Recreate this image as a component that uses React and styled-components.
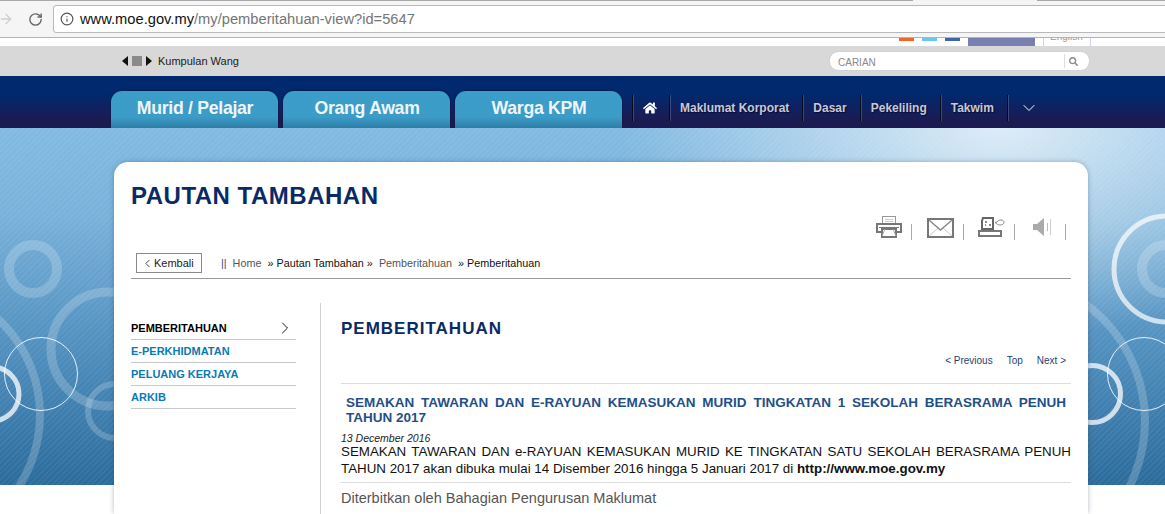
import React from "react";
import styled, { createGlobalStyle } from "styled-components";
import { FaHome, FaSearch } from "react-icons/fa";
import { ArrowRight, ChevronDown, ChevronLeft, ChevronRight, Info, RotateCw } from "lucide-react";

const GlobalStyle = createGlobalStyle`
  html, body {
    margin: 0;
    padding: 0;
    background: #fff;
    overflow: hidden;
  }
  * {
    box-sizing: border-box;
  }
  body {
    font-family: "Liberation Sans", Arial, sans-serif;
  }
`;

const Page = styled.div`
  width: 1165px;
  height: 514px;
  overflow: hidden;
  background: #fff;
`;

const TopEdge = styled.div`
  height: 1px;
  background: linear-gradient(to right, #a8a8a8 913px, #f2f2f2 913px, #f2f2f2 1037px, #a8a8a8 1037px);
`;

const Toolbar = styled.div`
  height: 37px;
  display: flex;
  align-items: flex-start;
  background: #f5f5f5;
  border-bottom: 1px solid #b4b4b4;
  padding-top: 4px;
`;

const BrowserButton = styled.div`
  height: 28px;
  display: flex;
  align-items: center;
  margin-left: ${(p) => p.$left}px;
  color: ${(p) => p.$color};
`;

const AddressBar = styled.div`
  flex: none;
  width: 1130px;
  height: 28px;
  margin-left: 10px;
  display: flex;
  align-items: center;
  gap: 6px;
  padding-left: 6px;
  background: #fff;
  border: 1px solid #b8b8b8;
  border-radius: 3px;
  color: #555;
`;

const Url = styled.span`
  font-size: 14.7px;
  color: #757575;
  white-space: nowrap;
  b {
    font-weight: normal;
    color: #111;
  }
`;

const SiteStrip = styled.div`
  height: 8px;
  display: flex;
  gap: 8px;
  align-items: flex-start;
  padding-left: 899px;
  overflow: hidden;
`;

const SocialChip = styled.div`
  flex: none;
  width: ${(p) => p.$w}px;
  height: ${(p) => p.$h}px;
  background: ${(p) => p.$color};
`;

const Language = styled.div`
  flex: none;
  width: 48px;
  height: 8px;
  border-left: 1px solid #d5d5e5;
  border-right: 1px solid #d5d5e5;
  font-size: 10px;
  line-height: 10px;
  color: #999;
  padding-left: 6px;
  overflow: hidden;
  span {
    display: block;
    margin-top: -6px;
  }
`;

const UtilityBar = styled.div`
  height: 30px;
  display: flex;
  align-items: center;
  background: #d8d8d8;
  padding-left: 122px;
`;

const Ticker = styled.div`
  display: flex;
  align-items: center;
  gap: 4px;
`;

const Arrow = styled.span`
  width: 0;
  height: 0;
  border-top: 5px solid transparent;
  border-bottom: 5px solid transparent;
  ${(p) => (p.$dir === "left" ? "border-right: 6px solid #111;" : "border-left: 6px solid #111;")}
`;

const StopBox = styled.span`
  width: 10px;
  height: 10px;
  background: #8a8a8a;
`;

const TickerText = styled.span`
  margin-left: 2px;
  font-size: 11px;
  color: #1a1a1a;
`;

const Search = styled.div`
  margin-left: auto;
  margin-right: 76px;
  width: 259px;
  height: 18px;
  display: flex;
  align-items: center;
  background: #fff;
  border-radius: 8px;
  box-shadow: 0 0 1px #aaa;
  font-size: 10px;
  color: #888;
  padding-left: 8px;
`;

const SearchLabel = styled.span`
  flex: 1;
  padding-top: 2px;
`;

const SearchButton = styled.span`
  width: 25px;
  height: 14px;
  display: flex;
  align-items: center;
  padding-left: 4px;
  border-left: 1px solid #ddd;
  color: #8a8a8a;
`;

const MainNav = styled.nav`
  height: 52px;
  display: flex;
  padding-left: 111px;
  background: linear-gradient(to bottom, #002a70 0%, #01296e 35%, #1b1b52 85%, #1c1a50 100%);
`;

const Tabs = styled.div`
  display: flex;
  gap: 5px;
  align-self: flex-end;
`;

const Tab = styled.a`
  width: 167px;
  height: 37px;
  display: flex;
  align-items: center;
  justify-content: center;
  padding: 0 0 2px 1px;
  border-radius: 11px 11px 0 0;
  background: linear-gradient(to bottom, #3b9dc9 0%, #3b9cc8 70%, #2d7ea6 100%);
  box-shadow: 0 -1px 2px rgba(0, 0, 0, 0.35);
  color: #eef6fa;
  font-size: 17.7px;
  font-weight: bold;
  letter-spacing: -0.3px;
`;

const Links = styled.div`
  display: flex;
  align-self: flex-start;
  margin-top: 19px;
  margin-left: 10px;
`;

const NavLink = styled.a`
  height: 26px;
  display: flex;
  align-items: center;
  padding: 0 13px 0 10px;
  border-left: 1px solid #05091f;
  box-shadow: inset 1px 0 0 rgba(255, 255, 255, 0.18);
  color: #c6cad6;
  font-size: 12px;
  font-weight: bold;
  white-space: nowrap;
  text-shadow: 1px 1px 1px #0a0a30;
`;

const NavIcon = styled(NavLink)`
  width: ${(p) => p.$w}px;
  padding: 0 0 0 ${(p) => p.$pad}px;
  color: #fff;
`;

const Stage = styled.div`
  position: relative;
  height: 386px;
  padding: 34px 0 0 114px;
  background: #fff;
`;

const Backdrop = styled.div`
  position: absolute;
  inset: 0 0 auto 0;
  height: 357px;
  overflow: hidden;
  background:
    repeating-linear-gradient(135deg, rgba(255, 255, 255, 0.05) 0 2px, rgba(255, 255, 255, 0) 2px 4px),
    radial-gradient(ellipse 380px 210px at 1000px 0, rgba(255, 255, 255, 0.72), rgba(255, 255, 255, 0) 100%),
    linear-gradient(to bottom, #82bae2 0%, #78b1da 25%, #5190bf 60%, #2a6b9c 100%);
`;

const Rings = styled.svg`
  position: absolute;
  inset: 0;
  width: 100%;
  height: 100%;
`;

const Card = styled.main`
  position: relative;
  width: 974px;
  height: 352px;
  padding: 20px 17px 0;
  background: #fff;
  border-radius: 14px 14px 0 0;
  box-shadow: 0 0 5px rgba(40, 60, 80, 0.35);
`;

const PageTitle = styled.h1`
  margin: 0;
  font-size: 24px;
  line-height: 27px;
  font-weight: bold;
  color: #0a2a66;
  letter-spacing: 0.5px;
`;

const ToolRow = styled.div`
  height: 26px;
  margin-top: 7px;
  display: flex;
  justify-content: flex-end;
  align-items: flex-start;
  padding-right: 5px;
`;

const Tool = styled.div`
  display: flex;
  align-items: flex-start;
  margin-left: ${(p) => p.$left}px;
  gap: ${(p) => p.$gap}px;
`;

const ToolSep = styled.span`
  width: 1px;
  height: 16px;
  margin-top: 8px;
  background: #aaa;
`;

const CrumbRow = styled.div`
  height: 26px;
  margin-top: 11px;
  display: flex;
  align-items: flex-start;
  padding-left: 5px;
  border-bottom: 1px solid #999;
`;

const BackButton = styled.a`
  width: 66px;
  height: 20px;
  display: flex;
  align-items: center;
  padding-left: 4px;
  border: 1px solid #8a8a8a;
  color: #222;
  font-size: 11px;
`;

const Crumbs = styled.div`
  height: 20px;
  line-height: 20px;
  margin-left: 19px;
  white-space: pre;
  font-size: 10.8px;
  color: #111;
`;

const CrumbLink = styled.a`
  color: #555;
`;

const Bars = styled.span`
  color: #4a4a7a;
`;

const Columns = styled.div`
  display: grid;
  grid-template-columns: 189px 1fr;
  margin-top: 24px;
  height: 220px;
`;

const SideMenu = styled.ul`
  list-style: none;
  margin: 0;
  padding: 14px 0 0;
  width: 165px;
`;

const SideItem = styled.li`
  height: 23px;
  display: flex;
  align-items: center;
  justify-content: space-between;
  padding-right: 1px;
  border-bottom: 1px solid #c8c8c8;
  font-size: 11px;
  font-weight: bold;
  color: ${(p) => (p.$active ? "#000" : "#0a7ab4")};
`;

const Content = styled.section`
  border-left: 1px solid #d0d0d0;
  padding: 16px 0 0 20px;
`;

const SectionTitle = styled.h2`
  margin: 0;
  font-size: 17px;
  line-height: 20px;
  font-weight: bold;
  letter-spacing: 1px;
  color: #0a2a66;
`;

const Pager = styled.div`
  height: 33px;
  margin-top: 12px;
  display: flex;
  justify-content: flex-end;
  gap: 14px;
  padding: 4px 5px 0 0;
  border-bottom: 1px solid #ddd;
  font-size: 10px;
  color: #1f3f73;
`;

const ArticleTitle = styled.h3`
  margin: 11px 5px 0;
  font-size: 13.5px;
  line-height: 15px;
  font-weight: bold;
  text-align: justify;
  color: #1f4f88;
`;

const ArticleDate = styled.div`
  margin-top: 8px;
  font-size: 10.5px;
  line-height: 10px;
  font-style: italic;
  color: #222;
`;

const ArticleBody = styled.p`
  margin: 0;
  padding-bottom: 5px;
  font-size: 13.35px;
  line-height: 17px;
  text-align: justify;
  color: #111;
  border-bottom: 1px solid #ddd;
  b {
    font-weight: bold;
  }
`;

const Publisher = styled.div`
  margin-top: 7px;
  font-size: 14.5px;
  line-height: 16px;
  color: #555;
`;

const PrinterIcon = () => (
  <svg width="26" height="22" viewBox="0 0 26 22" fill="none">
    <rect x="6.5" y="0.5" width="13" height="8" stroke="#999" />
    <path d="M9 3.5h8M9 5.5h8" stroke="#ccc" />
    <rect x="1" y="8" width="24" height="8" stroke="#777" strokeWidth="2" />
    <path d="M3 11.5h20" stroke="#777" />
    <rect x="6" y="13" width="14" height="8" fill="#fff" stroke="#777" strokeWidth="2" />
    <path d="M9 13l-3 7M17 13l3 7" stroke="#aaa" />
  </svg>
);

const MailIcon = () => (
  <svg width="27" height="22" viewBox="0 0 27 22" fill="none">
    <path d="M2 20l9-8M25 20l-9-8" stroke="#ccc" />
    <path d="M2 4l11.5 10L25 4" stroke="#888" strokeWidth="1.4" />
    <rect x="1" y="3" width="25" height="18" stroke="#777" strokeWidth="2" />
  </svg>
);

const FaxIcon = () => (
  <svg width="27" height="21" viewBox="0 0 27 21" fill="none">
    <path d="M5 2h10v11H4V5z" stroke="#666" strokeWidth="2" />
    <path d="M7 6h2M7 9h1M11 9h2" stroke="#666" strokeWidth="1.5" />
    <rect x="1" y="15" width="22" height="5" stroke="#777" strokeWidth="2" />
    <path d="M17 6.500l2-.5c1-1 2-2 4-2s3 1 3 2.500-2 2.500-4 2.500-3-1-5-2.500z" stroke="#888" />
  </svg>
);

const SpeakerIcon = () => (
  <svg width="19" height="21" viewBox="0 0 19 21" fill="none">
    <path d="M0 8h4l7-6v18l-7-6H0z" fill="#aaa" />
    <path d="M14.500 7v8" stroke="#bbb" />
    <path d="M17.500 3v16" stroke="#ccc" />
  </svg>
);

export default function App() {
  return (
    <Page>
      <GlobalStyle />
      <TopEdge />
      <Toolbar>
        <BrowserButton $left={-2} $color="#cfcfcf">
          <ArrowRight size={16} strokeWidth={2} />
        </BrowserButton>
        <BrowserButton $left={14} $color="#666">
          <RotateCw size={15} strokeWidth={2.2} />
        </BrowserButton>
        <AddressBar>
          <Info size={14} strokeWidth={2} />
          <Url>
            <b>www.moe.gov.my</b>/my/pemberitahuan-view?id=5647
          </Url>
        </AddressBar>
      </Toolbar>
      <SiteStrip>
        <SocialChip $w={15} $h={3} $color="#f26522" />
        <SocialChip $w={15} $h={3} $color="#6cc5ea" />
        <SocialChip $w={15} $h={3} $color="#3c64b0" />
        <SocialChip $w={67} $h={8} $color="#7a7fb2" />
        <Language>
          <span>English</span>
        </Language>
      </SiteStrip>
      <UtilityBar>
        <Ticker>
          <Arrow $dir="left" />
          <StopBox />
          <Arrow $dir="right" />
          <TickerText>Kumpulan Wang</TickerText>
        </Ticker>
        <Search>
          <SearchLabel>CARIAN</SearchLabel>
          <SearchButton>
            <FaSearch size={9} />
          </SearchButton>
        </Search>
      </UtilityBar>
      <MainNav>
        <Tabs>
          <Tab>Murid / Pelajar</Tab>
          <Tab>Orang Awam</Tab>
          <Tab>Warga KPM</Tab>
        </Tabs>
        <Links>
          <NavIcon $w={37} $pad={10}>
            <FaHome size={14} />
          </NavIcon>
          <NavLink>Maklumat Korporat</NavLink>
          <NavLink>Dasar</NavLink>
          <NavLink>Pekeliling</NavLink>
          <NavLink>Takwim</NavLink>
          <NavIcon $w={40} $pad={11}>
            <ChevronDown size={20} strokeWidth={1.2} />
          </NavIcon>
        </Links>
      </MainNav>
      <Stage>
        <Backdrop>
          <Rings viewBox="0 0 1165 357" fill="none">
            <g stroke="#fff">
              <circle cx="33" cy="141" r="24" strokeWidth="10" opacity="0.2" />
              <circle cx="108" cy="221" r="57" strokeWidth="9" opacity="0.2" />
              <circle cx="-91" cy="287" r="131" strokeWidth="8" opacity="0.2" />
              <circle cx="115" cy="283" r="27" strokeWidth="6" opacity="0.2" />
              <circle cx="-8" cy="266" r="27" strokeWidth="5" opacity="0.75" />
              <circle cx="41" cy="246" r="36.500" opacity="0.85" />
              <circle cx="1167" cy="141" r="53" strokeWidth="5" opacity="0.7" />
              <circle cx="1166" cy="141" r="24" strokeWidth="10" opacity="0.2" />
              <circle cx="1000" cy="293" r="145" strokeWidth="8" opacity="0.2" />
              <circle cx="1092" cy="266" r="28.500" strokeWidth="5" opacity="0.75" />
              <circle cx="1144" cy="246" r="36.500" opacity="0.85" />
            </g>
          </Rings>
        </Backdrop>
        <Card>
          <PageTitle>PAUTAN TAMBAHAN</PageTitle>
          <ToolRow>
            <Tool $left={0} $gap={9}>
              <PrinterIcon />
              <ToolSep />
            </Tool>
            <Tool $left={15} $gap={9}>
              <MailIcon />
              <ToolSep />
            </Tool>
            <Tool $left={14} $gap={9}>
              <FaxIcon />
              <ToolSep />
            </Tool>
            <Tool $left={18} $gap={13}>
              <SpeakerIcon />
              <ToolSep />
            </Tool>
          </ToolRow>
          <CrumbRow>
            <BackButton>
              <ChevronLeft size={13} strokeWidth={1.5} />
              Kembali
            </BackButton>
            <Crumbs>
              <Bars>||</Bars>
              {"  "}
              <CrumbLink>Home</CrumbLink>
              {"  » Pautan Tambahan »  "}
              <CrumbLink>Pemberitahuan</CrumbLink>
              {"  » Pemberitahuan"}
            </Crumbs>
          </CrumbRow>
          <Columns>
            <SideMenu>
              <SideItem $active>
                PEMBERITAHUAN
                <ChevronRight size={20} strokeWidth={1.1} />
              </SideItem>
              <SideItem>E-PERKHIDMATAN</SideItem>
              <SideItem>PELUANG KERJAYA</SideItem>
              <SideItem>ARKIB</SideItem>
            </SideMenu>
            <Content>
              <SectionTitle>PEMBERITAHUAN</SectionTitle>
              <Pager>
                <span>&lt; Previous</span>
                <span>Top</span>
                <span>Next &gt;</span>
              </Pager>
              <ArticleTitle>
                SEMAKAN TAWARAN DAN E-RAYUAN KEMASUKAN MURID TINGKATAN 1 SEKOLAH BERASRAMA PENUH TAHUN 2017
              </ArticleTitle>
              <ArticleDate>13 December 2016</ArticleDate>
              <ArticleBody>
                SEMAKAN TAWARAN DAN e-RAYUAN KEMASUKAN MURID KE TINGKATAN SATU SEKOLAH BERASRAMA PENUH TAHUN 2017 akan dibuka mulai 14 Disember 2016 hingga 5 Januari 2017 di <b>http://www.moe.gov.my</b>
              </ArticleBody>
              <Publisher>Diterbitkan oleh Bahagian Pengurusan Maklumat</Publisher>
            </Content>
          </Columns>
        </Card>
      </Stage>
    </Page>
  );
}
